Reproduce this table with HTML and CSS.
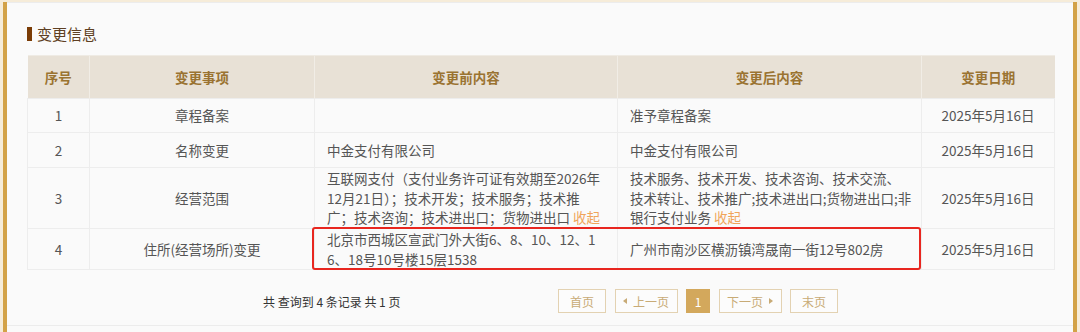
FILE: index.html
```html
<!DOCTYPE html>
<html lang="zh">
<head>
<meta charset="utf-8">
<title>变更信息</title>
<link rel="stylesheet" href="styles.css">
</head>
<body>
<div class="outer">
  <div class="inner">
    <div class="content">
      <h2 class="title"><span class="marker"></span>变更信息</h2>
      <div class="table-wrap">
        <table class="tbl">
          <colgroup>
            <col class="c1"><col class="c2"><col class="c3"><col class="c4"><col class="c5">
          </colgroup>
          <thead>
            <tr><th>序号</th><th>变更事项</th><th>变更前内容</th><th>变更后内容</th><th>变更日期</th></tr>
          </thead>
          <tbody>
            <tr class="r1"><td class="ctr">1</td><td class="ctr">章程备案</td><td></td><td>准予章程备案</td><td class="ctr">2025年5月16日</td></tr>
            <tr class="r2"><td class="ctr">2</td><td class="ctr">名称变更</td><td>中金支付有限公司</td><td>中金支付有限公司</td><td class="ctr">2025年5月16日</td></tr>
            <tr class="r3"><td class="ctr">3</td><td class="ctr">经营范围</td><td class="nw">互联网支付（支付业务许可证有效期至2026年<br>12月21日）；技术开发；技术服务；技术推<br>广；技术咨询；技术进出口；货物进出口 <span class="fold">收起</span></td><td class="nw">技术服务、技术开发、技术咨询、技术交流、<br>技术转让、技术推广;技术进出口;货物进出口;非<br>银行支付业务 <span class="fold">收起</span></td><td class="ctr">2025年5月16日</td></tr>
            <tr class="r4"><td class="ctr">4</td><td class="ctr">住所(经营场所)变更</td><td class="nw">北京市西城区宣武门外大街6、8、10、12、1<br>6、18号10号楼15层1538</td><td>广州市南沙区横沥镇湾晟南一街12号802房</td><td class="ctr">2025年5月16日</td></tr>
          </tbody>
        </table>
        <div class="highlight"></div>
      </div>
      <div class="pager">
        <div class="summary">共 查询到 4 条记录 共 1 页</div>
        <div class="btns">
          <span class="btn w48">首页</span>
          <span class="btn w63"><i class="tri-l"></i>上一页</span>
          <span class="btn cur">1</span>
          <span class="btn w63">下一页<i class="tri-r"></i></span>
          <span class="btn w48">末页</span>
        </div>
      </div>
    </div>
  </div>
</div>
</body>
</html>
```
FILE: styles.css
```css
html, body {
  margin: 0;
  padding: 0;
}
body {
  width: 1080px;
  height: 332px;
  overflow: hidden;
  font-family: "Noto Sans CJK SC", "Microsoft YaHei", sans-serif;
  background: #f6ecd9;
}
.outer {
  padding: 0 3px;
  height: 332px;
  box-sizing: border-box;
}
.inner {
  height: 100%;
  border-left: 4px solid #d3a247;
  border-right: 4px solid #d3a247;
  background: #fafafa;
  box-sizing: border-box;
}
.content {
  margin-top: 2px;
  border-top: 1px solid #ececec;
  padding: 0 19px 0 20px;
  height: 322px;
  border-bottom: 1px solid #ececec;
}
.title {
  margin: 0;
  padding-top: 20px;
  height: 21px;
  line-height: 21px;
  font-size: 15px;
  font-weight: normal;
  color: #5e3f22;
  display: flex;
  align-items: center;
}
.marker {
  display: inline-block;
  width: 5px;
  height: 14px;
  background: #7a3c06;
  margin-right: 5px;
}
.table-wrap {
  position: relative;
  margin-top: 11px;
}
.tbl {
  width: 1027px;
  border-collapse: collapse;
  table-layout: fixed;
  font-size: 13.5px;
  color: #555;
}
.c1 { width: 62px; }
.c2 { width: 225px; }
.c3 { width: 303px; }
.c4 { width: 304px; }
.c5 { width: 133px; }
.tbl th {
  box-sizing: border-box;
  height: 43px;
  padding: 0;
  background: #e8e1d6;
  color: #9a7331;
  font-weight: bold;
  font-size: 13.5px;
  border-left: 1px solid #f1ede6;
  border-top: 1px solid #efebe4;
}
.tbl th:first-child { border-left: none; }
.tbl td {
  box-sizing: border-box;
  padding: 1px 12px 0 12px;
  line-height: 19.5px;
  border: 1px solid #ededed;
  background: #fafafa;
  vertical-align: middle;
}
.tbl td.ctr { text-align: center; padding-left: 4px; padding-right: 4px; }
.tbl td.nw { white-space: nowrap; }
.r1 td { height: 34px; }
.r2 td { height: 35px; }
.r3 td { height: 61px; }
.r4 td { height: 40px; }
.fold { color: #f0a55a; }
.highlight {
  position: absolute;
  left: 285px;
  top: 172px;
  width: 605px;
  height: 39px;
  border: 2.5px solid #e8261f;
  border-radius: 3px;
}
.pager {
  display: flex;
  align-items: center;
  margin-top: 19px;
  padding-left: 236px;
  height: 24px;
}
.summary {
  width: 295px;
  font-size: 12px;
  color: #333;
}
.btns {
  display: flex;
  gap: 8.5px;
}
.btn {
  box-sizing: border-box;
  height: 24px;
  border: 1px solid #e3d2b2;
  color: #c8ab76;
  font-size: 12px;
  display: flex;
  align-items: center;
  justify-content: center;
  background: #fcfcfc;
}
.w48 { width: 48px; }
.w63 { width: 63px; }
.btn.cur {
  width: 24px;
  background: #d3a85c;
  border-color: #d3a85c;
  color: #fff;
}
.tri-l, .tri-r {
  display: inline-block;
  width: 0;
  height: 0;
  border-top: 3.5px solid transparent;
  border-bottom: 3.5px solid transparent;
}
.tri-l {
  border-right: 4px solid #c8ab76;
  margin-right: 6px;
}
.tri-r {
  border-left: 4px solid #c8ab76;
  margin-left: 6px;
}
```
